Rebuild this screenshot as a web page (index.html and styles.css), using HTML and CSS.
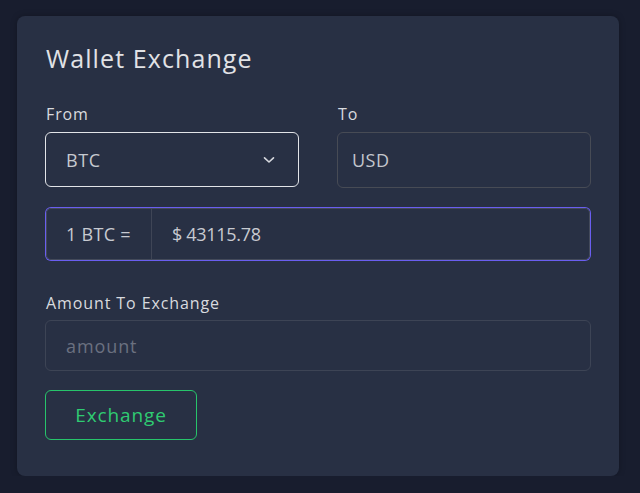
FILE: index.html
```html
<!DOCTYPE html>
<html>
<head>
<meta charset="utf-8">
<link rel="stylesheet" href="styles.css">
</head>
<body>
<div class="card">
  <h1 class="title">Wallet Exchange</h1>
  <div class="row">
    <div class="field">
      <label class="label">From</label>
      <div class="select">
        <span>BTC</span>
        <svg class="chev" width="12" height="8" viewBox="0 0 12 8"><path d="M1.5 1.8 L6 6 L10.5 1.8" fill="none" stroke="#d6d8de" stroke-width="1.6" stroke-linecap="round" stroke-linejoin="round"/></svg>
      </div>
    </div>
    <div class="field">
      <label class="label">To</label>
      <div class="input to">USD</div>
    </div>
  </div>
  <div class="rate">
    <div class="rate-pre">1 BTC =</div>
    <div class="rate-val">$ 43115.78</div>
  </div>
  <label class="label amount-label">Amount To Exchange</label>
  <div class="input amount">amount</div>
  <button class="btn">Exchange</button>
</div>
</body>
</html>
```
FILE: styles.css
```css
html, body {
  margin: 0;
  padding: 0;
}
body {
  background: #181d2e;
  padding: 16px 21px 0 17px;
  font-family: "Open Sans", "DejaVu Sans", sans-serif;
  color: #dcdee3;
}
.card {
  background: #283044;
  border-radius: 8px;
  padding: 27px 28px 36px 28px;
  box-shadow: 0 0 6px rgba(0,0,0,0.25);
}
.title {
  margin: 0 0 0 1px;
  font-size: 25px;
  font-weight: 400;
  line-height: 30px;
  color: #e1e2e6;
  letter-spacing: 1.1px;
}
.row {
  display: flex;
  gap: 38px;
  margin-top: 31px;
}
.field {
  flex: 1;
  display: flex;
  flex-direction: column;
}
.label {
  font-size: 16px;
  line-height: 20px;
  color: #d8dadf;
  margin: 0 0 8px 1px;
  display: block;
  letter-spacing: 0.9px;
}
.select {
  height: 55px;
  box-sizing: border-box;
  border: 1px solid #e2e4e8;
  border-radius: 6px;
  display: flex;
  align-items: center;
  justify-content: space-between;
  padding: 0 23px 0 20px;
  font-size: 18px;
  color: #c6c9d0;
  letter-spacing: 0.6px;
}
.chev {
  display: block;
}
.input {
  box-sizing: border-box;
  border: 1px solid #474b55;
  border-radius: 6px;
  display: flex;
  align-items: center;
  padding: 0 20px;
  font-size: 18px;
  color: #c3c6cd;
}
.to {
  height: 56px;
  padding-left: 14px;
  letter-spacing: 0.5px;
}
.rate {
  margin: 20px 1px 0 1px;
  height: 52px;
  box-sizing: border-box;
  border: 1px solid #434a5a;
  border-radius: 5px;
  box-shadow: 0 0 0 1px #6a5ef0;
  display: flex;
  font-size: 18px;
  color: #c7cad1;
}
.rate-pre {
  width: 105px;
  box-sizing: border-box;
  border-right: 1px solid #3f4556;
  display: flex;
  align-items: center;
  padding-left: 19px;
  letter-spacing: 0.3px;
}
.rate-val {
  display: flex;
  align-items: center;
  padding-left: 20px;
  letter-spacing: -0.3px;
}
.amount-label {
  margin-top: 33px;
  margin-bottom: 7px;
}
.amount {
  height: 51px;
  border-color: #3d4455;
  color: #6b7080;
  letter-spacing: 0.9px;
}
.btn {
  display: block;
  margin-top: 19px;
  width: 152px;
  height: 50px;
  background: transparent;
  border: 1px solid #27c46b;
  border-radius: 6px;
  color: #2fcb72;
  font-family: inherit;
  font-size: 19px;
  font-weight: 500;
  letter-spacing: 0.9px;
  padding: 0;
  cursor: pointer;
}
```
